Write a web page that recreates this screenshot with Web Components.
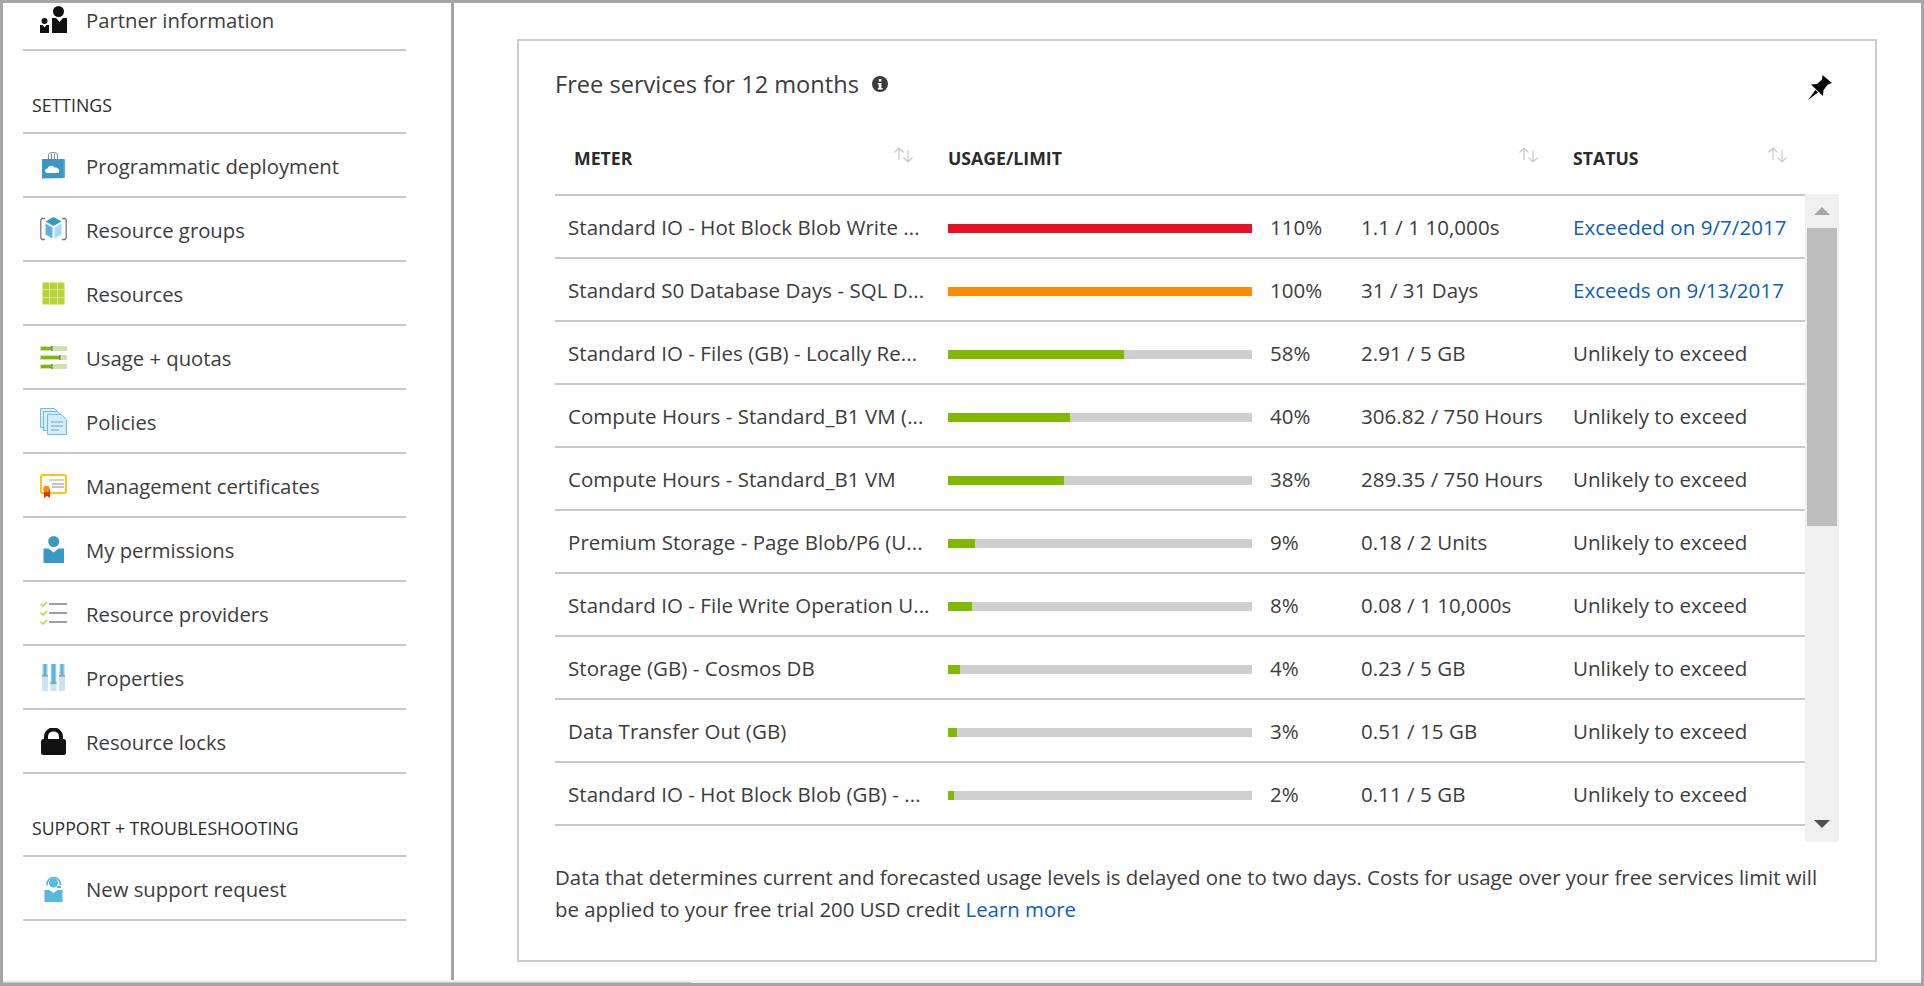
<!DOCTYPE html>
<html lang="en">
<head>
<meta charset="utf-8">
<title>Free services for 12 months</title>
<style>
  html, body { margin: 0; height: 100%; overflow: hidden; background: #fff; }
  body { font-family: "Open Sans", "Liberation Sans", sans-serif; color: #3c3c3c; }
  usage-card a { color: #0b5fb4; text-decoration: none; }
</style>
</head>
<body>
<portal-page>
  <side-nav slot="nav">
    <nav-item icon="partner" first>Partner information</nav-item>
    <nav-section>Settings</nav-section>
    <nav-item icon="deploy">Programmatic deployment</nav-item>
    <nav-item icon="groups">Resource groups</nav-item>
    <nav-item icon="resources">Resources</nav-item>
    <nav-item icon="usage">Usage + quotas</nav-item>
    <nav-item icon="policies">Policies</nav-item>
    <nav-item icon="cert">Management certificates</nav-item>
    <nav-item icon="person">My permissions</nav-item>
    <nav-item icon="providers">Resource providers</nav-item>
    <nav-item icon="props">Properties</nav-item>
    <nav-item icon="lock">Resource locks</nav-item>
    <nav-section>Support + troubleshooting</nav-section>
    <nav-item icon="support">New support request</nav-item>
  </side-nav>
  <usage-card title-text="Free services for 12 months">
    <usage-row percent="110" color="#e81123" usage="1.1 / 1 10,000s" status="Exceeded on 9/7/2017" link>Standard IO - Hot Block Blob Write ...</usage-row>
    <usage-row percent="100" color="#ff8c00" usage="31 / 31 Days" status="Exceeds on 9/13/2017" link>Standard S0 Database Days - SQL D...</usage-row>
    <usage-row percent="58" usage="2.91 / 5 GB" status="Unlikely to exceed">Standard IO - Files (GB) - Locally Re...</usage-row>
    <usage-row percent="40" usage="306.82 / 750 Hours" status="Unlikely to exceed">Compute Hours - Standard_B1 VM (...</usage-row>
    <usage-row percent="38" usage="289.35 / 750 Hours" status="Unlikely to exceed">Compute Hours - Standard_B1 VM</usage-row>
    <usage-row percent="9" usage="0.18 / 2 Units" status="Unlikely to exceed">Premium Storage - Page Blob/P6 (U...</usage-row>
    <usage-row percent="8" usage="0.08 / 1 10,000s" status="Unlikely to exceed">Standard IO - File Write Operation U...</usage-row>
    <usage-row percent="4" usage="0.23 / 5 GB" status="Unlikely to exceed">Storage (GB) - Cosmos DB</usage-row>
    <usage-row percent="3" usage="0.51 / 15 GB" status="Unlikely to exceed">Data Transfer Out (GB)</usage-row>
    <usage-row percent="2" usage="0.11 / 5 GB" status="Unlikely to exceed">Standard IO - Hot Block Blob (GB) - ...</usage-row>
    <div slot="note">Data that determines current and forecasted usage levels is delayed one to two days. Costs for usage over your free services limit will<br>be applied to your free trial 200 USD credit <a href="#">Learn more</a></div>
  </usage-card>
</portal-page>

<script>
/*
  blade de uso: barra lateral + tarjeta con la tabla de servicios gratis
  los iconos van todos aqui, en una caja de 27x27
*/
const ICONS = {
  partner: `<circle cx="18.5" cy="5.5" r="5.5" fill="#111"/><path d="M12 12h4l3.5 4 3.5-4h4v15H12z" fill="#111"/><circle cx="4.5" cy="15" r="3" fill="#111"/><path d="M0 19h2.5l2 2.5 2-2.5H9v8H0z" fill="#111"/>`,
  deploy: `<path d="M8.500 8V3C8.500-.5 17.500-.5 17.500 3V8M11.500 7V1.500M14.500 7V1.500" fill="none" stroke="#8a8a8a" stroke-width="1"/><path d="M2 7h23v19l-23 .5z" fill="#3999c6"/><path d="M23.500 7h1.500v19h-1.500z" fill="#59b4d9"/><path d="M7.500 21c-3.200 0-3.200-4.500 0-4.500 .5-3 5.500-4 7-1 3.500-.5 5.500 2 4.500 5.500z" fill="#fff"/>`,
  groups: `<path d="M5 2.500H2L.8 4v18l1.200 1.500h3M22 2.500h3L26.200 4v18L25 23.500h-3" fill="none" stroke="#7a7a7a" stroke-width="1.300"/><path d="M13.500 1l8 4.500-8 4.500-8-4.500z" fill="#3999c6"/><path d="M5.500 7.500l7 4v11l-7-4z" fill="#59b4d9"/><path d="M21.500 7.500l-7 4v11l7-4z" fill="#a8dcf0"/>`,
  resources: `<g fill="#b8d432"><rect x="2.500" y="2.500" width="7" height="7"/><rect x="10" y="2.500" width="7" height="7"/><rect x="17.500" y="2.500" width="7" height="7"/><rect x="2.500" y="10" width="7" height="7"/><rect x="10" y="10" width="7" height="7"/><rect x="17.500" y="10" width="7" height="7"/><rect x="2.500" y="17.500" width="7" height="7"/><rect x="10" y="17.500" width="7" height="7"/><rect x="17.500" y="17.500" width="7" height="7"/></g>`,
  usage: `<g fill="#cfe3a8"><rect y="2" width="27" height="5"/><rect y="11" width="27" height="5"/><rect y="20" width="27" height="5"/></g><g fill="#7fba00"><rect x="1" y="3" width="11" height="3"/><rect x="1" y="12" width="19" height="3"/><rect x="1" y="21" width="11" height="3"/></g><g fill="#7a7a7a"><rect x="11" y="2" width="1.500" height="5"/><rect x="19" y="11" width="1.500" height="5"/><rect x="11" y="20" width="1.500" height="5"/></g>`,
  policies: `<g fill="#d5edf7" stroke="#6cc0e0" stroke-width="1"><path d="M.5.5h14l2 2v17H.5z"/><path d="M3.500 3.500h14l2 2v17h-16z"/><path d="M7.500 6.500h14l5 5v15h-19z"/></g><path d="M11 14h12M11 18h12M11 22h8" stroke="#7fc6e2" stroke-width="1.300"/>`,
  cert: `<rect x="1" y="3" width="25" height="18" rx="1.500" fill="#fff" stroke="#fcc419" stroke-width="2"/><path d="M9 8h15" stroke="#a6a6a6" stroke-width="1"/><path d="M12 12h12M12 15h12" stroke="#8a8a8a" stroke-width="1"/><path d="M4 17h6v9l-3-2-3 2z" fill="#d83b01"/><circle cx="6.500" cy="17" r="3.300" fill="#ff8c00"/>`,
  person: `<circle cx="13.700" cy="5.500" r="5.500" fill="#3999c6"/><path d="M3.500 12.500h5l5 4 5-4H24V27H3.500z" fill="#3999c6"/>`,
  providers: `<g fill="none" stroke="#b8d432" stroke-width="1.500"><path d="M.5 4l2.500 2 4-4"/><path d="M.5 13l2.500 2 4-4"/><path d="M.5 22l2.500 2 4-4"/></g><g fill="#a0a0a0"><rect x="9" y="3" width="18" height="2"/><rect x="9" y="12" width="18" height="2"/><rect x="9" y="21" width="18" height="2"/></g>`,
  props: `<g fill="#c6e6f3"><rect x="2" width="6" height="27"/><rect x="10.500" width="6" height="27"/><rect x="19" width="6" height="27"/></g><g fill="#59b4d9"><rect x="3.500" width="3" height="11"/><rect x="11.500" width="4" height="18"/><rect x="20.500" width="3" height="11"/></g><g fill="#9a9a9a"><rect x="2" y="11" width="6" height="1.500"/><rect x="10.500" y="18" width="6" height="2"/><rect x="19" y="11" width="6" height="1.500"/></g>`,
  lock: `<path d="M6 12V9c0-10 15-10 15 0v3" fill="none" stroke="#111" stroke-width="4"/><rect x="1" y="11" width="25" height="16" rx="2.500" fill="#111"/>`,
  support: `<path d="M7 10.500A6.800 6.800 0 1 1 20.500 10" fill="none" stroke="#59b8de" stroke-width="1.800"/><circle cx="13.500" cy="8" r="4.500" fill="#59b8de"/><path d="M4.500 15h5l4 3 4-3h5v12h-18z" fill="#59b8de"/><rect x="17" y="11" width="4" height="2" fill="#59b8de"/>`
}

const pageTemplate = document.createElement('template')
pageTemplate.innerHTML = `
<style>
  :host {
    display: flex;
    flex-direction: column;
    height: 986px;
    box-sizing: border-box;
    border: 3px solid #a6a6a6;
    overflow: hidden;
  }
  .top { display: flex; flex: 1; min-height: 0; }
  .nav { width: 448px; flex: none; border-right: 3px solid #a6a6a6; overflow: hidden; }
  .main { flex: 1; padding: 36px 0 0 63px; }
  .strip { height: 3px; flex: none; background: linear-gradient(#c8c8c8, #c8c8c8) left bottom / 688px 1px no-repeat, #f0f0f0; }
</style>
<div class="top">
  <div class="nav"><slot name="nav"></slot></div>
  <div class="main"><slot></slot></div>
</div>
<div class="strip"></div>
`
class PortalPage extends HTMLElement {
  constructor () {
    super()
    this.attachShadow({ mode: 'open' })
    this.shadowRoot.appendChild(pageTemplate.content.cloneNode(true))
  }
}

const sideNavTemplate = document.createElement('template')
sideNavTemplate.innerHTML = `
<style>
  :host { display: block; margin: -14px 0 0 20px; width: 383px; }
</style>
<slot></slot>
`
class SideNav extends HTMLElement {
  constructor () {
    super()
    this.attachShadow({ mode: 'open' })
    this.shadowRoot.appendChild(sideNavTemplate.content.cloneNode(true))
  }
}

const navItemTemplate = document.createElement('template')
navItemTemplate.innerHTML = `
<style>
  :host {
    display: flex;
    align-items: center;
    box-sizing: border-box;
    height: 64px;
    border-bottom: 2px solid #c8c8c8;
    font-size: 20.3px;
    color: #3c3c3c;
  }
  :host([first]) { height: 62px; }
  svg { width: 27px; height: 27px; margin: 0 19px 0 17px; flex: none; }
  span { padding-top: 2px; }
</style>
<svg viewBox="0 0 27 27"></svg>
<span><slot></slot></span>
`
class NavItem extends HTMLElement {
  constructor () {
    super()
    this.attachShadow({ mode: 'open' })
    this.shadowRoot.appendChild(navItemTemplate.content.cloneNode(true))
  }

  connectedCallback () {
    this.shadowRoot.querySelector('svg').innerHTML = ICONS[this.getAttribute('icon')] ?? ''
  }
}

const navSectionTemplate = document.createElement('template')
navSectionTemplate.innerHTML = `
<style>
  :host {
    display: flex;
    align-items: flex-end;
    box-sizing: border-box;
    height: 83px;
    padding: 0 0 15px 9px;
    border-bottom: 2px solid #c8c8c8;
    font-size: 17.7px;
    line-height: 24px;
    text-transform: uppercase;
    color: #2b2b2b;
  }
</style>
<slot></slot>
`
class NavSection extends HTMLElement {
  constructor () {
    super()
    this.attachShadow({ mode: 'open' })
    this.shadowRoot.appendChild(navSectionTemplate.content.cloneNode(true))
  }
}

const sortTemplate = document.createElement('template')
sortTemplate.innerHTML = `
<style>
  :host { display: block; width: 21px; height: 16px; margin-top: -6px; }
  svg { display: block; }
</style>
<svg width="21" height="16" viewBox="0 0 21 16" fill="none" stroke="#c8c8c8" stroke-width="1.200">
  <path d="M6 13V1M1.500 5.500L6 1l4.500 4.500"/>
  <path d="M15 3v12M10.500 10.500L15 15l4.500-4.500"/>
</svg>
`
class SortArrows extends HTMLElement {
  constructor () {
    super()
    this.attachShadow({ mode: 'open' })
    this.shadowRoot.appendChild(sortTemplate.content.cloneNode(true))
  }
}

const cardTemplate = document.createElement('template')
cardTemplate.innerHTML = `
<style>
  :host {
    display: block;
    box-sizing: border-box;
    width: 1360px;
    height: 923px;
    padding: 0 36px;
    border: 2px solid #ccc;
    background: #fff;
  }
  .title { display: flex; align-items: center; height: 86px; font-size: 23.6px; color: #3c3c3c; }
  .info { margin-left: 13px; }
  .pin { margin-left: auto; margin-right: 7px; margin-top: 7px; }
  .head {
    display: grid;
    grid-template-columns: 393px 625px 249px;
    align-items: center;
    height: 67px;
    padding-bottom: 5px;
    box-sizing: border-box;
    font-size: 17.7px;
    font-weight: 700;
    color: #2b2b2b;
  }
  .head > div { display: flex; align-items: center; justify-content: space-between; padding-right: 34px; }
  .head > div:first-child { padding-left: 19px; }
  .body { display: flex; height: 648px; }
  .rows { width: 1250px; border-top: 2px solid #c8c8c8; box-sizing: border-box; height: 632px; }
  .bar { width: 34px; background: #f0f0f0; display: flex; flex-direction: column; align-items: center; }
  .up, .down { width: 0; height: 0; border-left: 8px solid transparent; border-right: 8px solid transparent; }
  .up { margin-top: 13px; border-bottom: 8px solid #a6a6a6; }
  .thumb { width: 30px; height: 298px; margin-top: 13px; background: #bdbdbd; }
  .down { margin-top: auto; margin-bottom: 14px; border-top: 8px solid #505050; }
  .note { margin: 19px 0 0; font-size: 20.4px; line-height: 32px; color: #3c3c3c; white-space: nowrap; }
</style>
<div class="title">
  <span class="name"></span>
  <svg class="info" width="16" height="16" viewBox="0 0 16 16"><circle cx="8" cy="8" r="8" fill="#3c3c3c"/><rect x="6.800" y="3" width="2.600" height="2.600" fill="#fff"/><path d="M5.800 7h3.600v5h1.200v1.500H5.800V12h1V8.500h-1z" fill="#fff"/></svg>
  <svg class="pin" width="24" height="25" viewBox="0 0 24 25"><path d="M14.500 0L24 8l-4 1.500-4.500 5.500-.5 6L3 9.500l6-.5 5-4.500z" fill="#000"/><path d="M0 25l7.500-10 2.500 2.500z" fill="#000"/></svg>
</div>
<div class="head">
  <div>METER<sort-arrows></sort-arrows></div>
  <div>USAGE/LIMIT<sort-arrows></sort-arrows></div>
  <div>STATUS<sort-arrows></sort-arrows></div>
</div>
<div class="body">
  <div class="rows"><slot></slot></div>
  <div class="bar"><div class="up"></div><div class="thumb"></div><div class="down"></div></div>
</div>
<div class="note"><slot name="note"></slot></div>
`
class UsageCard extends HTMLElement {
  constructor () {
    super()
    this.attachShadow({ mode: 'open' })
    this.shadowRoot.appendChild(cardTemplate.content.cloneNode(true))
  }

  connectedCallback () {
    this.shadowRoot.querySelector('.name').textContent = this.getAttribute('title-text')
  }
}

const rowTemplate = document.createElement('template')
rowTemplate.innerHTML = `
<style>
  :host {
    display: grid;
    grid-template-columns: 380px 304px 109px 212px 1fr;
    align-items: center;
    box-sizing: border-box;
    height: 63px;
    padding-left: 13px;
    border-bottom: 2px solid #c8c8c8;
    font-size: 20.5px;
    letter-spacing: .05px;
    color: #3c3c3c;
    white-space: nowrap;
  }
  .track { height: 9px; margin-top: 4px; background: #cfcfcf; }
  .fill { height: 100%; background: #7fba00; }
  .pct { padding-left: 18px; }
  .status.link { color: #0b5fb4; }
</style>
<div class="meter"><slot></slot></div>
<div class="track"><div class="fill"></div></div>
<div class="pct"></div>
<div class="usage"></div>
<div class="status"></div>
`
class UsageRow extends HTMLElement {
  constructor () {
    super()
    this.attachShadow({ mode: 'open' })
    this.shadowRoot.appendChild(rowTemplate.content.cloneNode(true))
  }

  connectedCallback () {
    const percent = Number(this.getAttribute('percent'))
    const root = this.shadowRoot
    const fill = root.querySelector('.fill')

    fill.style.width = Math.min(percent, 100) + '%'
    if (this.hasAttribute('color')) fill.style.background = this.getAttribute('color')

    root.querySelector('.pct').textContent = percent + '%'
    root.querySelector('.usage').textContent = this.getAttribute('usage')

    const status = root.querySelector('.status')
    status.textContent = this.getAttribute('status')
    status.classList.toggle('link', this.hasAttribute('link'))
  }
}

customElements.define('portal-page', PortalPage)
customElements.define('side-nav', SideNav)
customElements.define('nav-item', NavItem)
customElements.define('nav-section', NavSection)
customElements.define('sort-arrows', SortArrows)
customElements.define('usage-card', UsageCard)
customElements.define('usage-row', UsageRow)
</script>
</body>
</html>
